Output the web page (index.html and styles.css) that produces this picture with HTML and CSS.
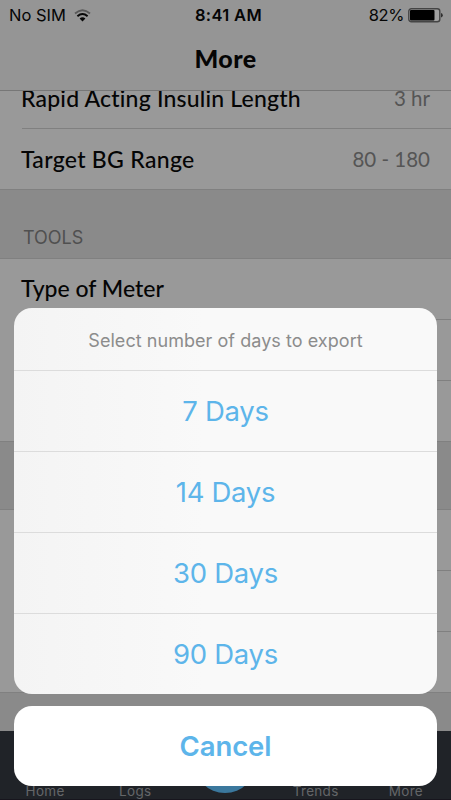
FILE: index.html
```html
<!DOCTYPE html>
<html lang="en">
<head>
<meta charset="utf-8">
<title>More</title>
<link rel="stylesheet" href="styles.css">
</head>
<body>
<div class="screen">
  <header class="header">
    <div class="status">
      <div class="carrier"><span class="sim">No SIM</span>
        <svg class="wifi" width="17" height="13" viewBox="0 0 17 13" fill="none">
          <path d="M1 4.500Q8.500-2 16 4.500" stroke="#595959" stroke-width="1.800"/>
          <path d="M3.400 7.200Q8.500 2.900 13.600 7.200" stroke="#080808" stroke-width="2"/>
          <path d="M5.600 9.500Q8.500 7.200 11.400 9.500L8.500 12.400Z" fill="#080808"/>
        </svg>
      </div>
      <span class="time">8:41 AM</span>
      <div class="power"><span class="percent">82%</span>
        <svg class="battery" width="35" height="15" viewBox="0 0 35 15">
          <rect x=".8" y=".8" width="31" height="13" rx="2.500" fill="#a0a0a0" stroke="#454545" stroke-width="1.400"/>
          <rect x="2" y="2" width="24.500" height="10.600" rx="1" fill="#000"/>
          <path d="M33 5Q34.800 5.300 34.800 7.300T33 9.600Z" fill="#303030"/>
        </svg>
      </div>
    </div>
    <h1 class="title">More</h1>
  </header>
  <main class="list">
    <section class="group first">
      <div class="row"><span class="label rapid">Rapid Acting Insulin Length</span><span class="value">3 hr</span></div>
      <div class="row"><span class="label target">Target BG Range</span><span class="value">80 - 180</span></div>
    </section>
    <h2 class="section tools">TOOLS</h2>
    <section class="group">
      <div class="row"><span class="label">Type of Meter</span></div>
      <div class="row"></div>
      <div class="row"></div>
    </section>
    <div class="section"></div>
    <section class="group">
      <div class="row"></div>
      <div class="row"></div>
      <div class="row"></div>
    </section>
  </main>
  <nav class="tabs">
    <span class="tab">Home</span>
    <span class="tab">Logs</span>
    <span class="tab"><i class="add"></i></span>
    <span class="tab">Trends</span>
    <span class="tab">More</span>
  </nav>
  <div class="sheet">
    <div class="options">
      <div class="prompt">Select number of days to export</div>
      <div class="option">7 Days</div>
      <div class="option">14 Days</div>
      <div class="option">30 Days</div>
      <div class="option">90 Days</div>
    </div>
    <div class="cancel">Cancel</div>
  </div>
</div>
</body>
</html>
```
FILE: styles.css
```css
* { box-sizing: border-box; }
body { margin: 0; font-family: Inter, "Liberation Sans", sans-serif; }
.screen { position: relative; width: 451px; height: 800px; overflow: hidden; display: flex; flex-direction: column; background: #8a8a8a; color: #050505; }
.header { height: 91px; flex: none; background: #959595; border-bottom: 1px solid #777; }
.status { height: 30px; padding: 0 8px 0 9px; display: grid; grid-template-columns: 1fr auto 1fr; align-items: center; font-size: 16.500px; line-height: 30px; }
.carrier, .power { display: flex; align-items: center; }
.power { justify-content: flex-end; gap: 4px; }
.carrier { gap: 8px; }
.percent { letter-spacing: -.4px; }
.time { padding-left: 5px; font-weight: 600; letter-spacing: .35px; }
.title { margin: 0; height: 60px; text-align: center; font: 900 25px/57px Lato, sans-serif; letter-spacing: .4px; }
.list { flex: none; height: 640px; overflow: hidden; }
.group { background: #999; border-bottom: 1px solid #808080; }
.row { height: 61px; padding-right: 21px; margin-left: 22px; display: flex; justify-content: space-between; font: 500 23px/59px Lato, sans-serif; font-variant-ligatures: none; }
.row:first-child { height: 60px; }
.row + .row { border-top: 1px solid #808080; line-height: 61px; }
.first .row:first-child { height: 37px; line-height: 14px; }
.label { margin-left: -1px; }
.rapid { letter-spacing: .2px; }
.target { letter-spacing: .3px; }
.value { color: #555; font-size: 20.500px; font-weight: 400; }
.section { margin: 0; height: 68px; border-bottom: 1px solid #808080; }
.tools { height: 69px; padding: 18px 0 0 23px; font: 400 18px/60px Inter, sans-serif; color: #505050; }
.tabs { flex: none; height: 69px; border-bottom: 1px solid #17151d; background: #202328; display: grid; grid-template-columns: repeat(5, 1fr); color: #646668; font-size: 13.500px; line-height: 16px; letter-spacing: .3px; }
.tab { display: flex; justify-content: center; align-items: flex-end; padding-bottom: 1px; }
.add { width: 62px; height: 62px; border-radius: 50%; background: #3b789d; margin-bottom: 6px; }
.sheet { position: absolute; left: 14px; right: 14px; top: 308px; display: grid; gap: 12px; text-align: center; color: #5db5ea; }
.options { height: 386px; overflow: hidden; border-radius: 18px; background: linear-gradient(90deg, #f4f4f4, #f9f9f9 45%); }
.prompt { height: 62px; font-size: 18px; line-height: 65px; color: #8c8c8c; letter-spacing: .05px; }
.option { height: 81px; border-top: 1px solid #dcdcdc; font-size: 27.500px; font-weight: 400; line-height: 81px; letter-spacing: -.3px; }
.cancel { height: 80px; border-radius: 18px; background: #fff; font-size: 27.500px; font-weight: 600; line-height: 81px; letter-spacing: -.1px; }
```
